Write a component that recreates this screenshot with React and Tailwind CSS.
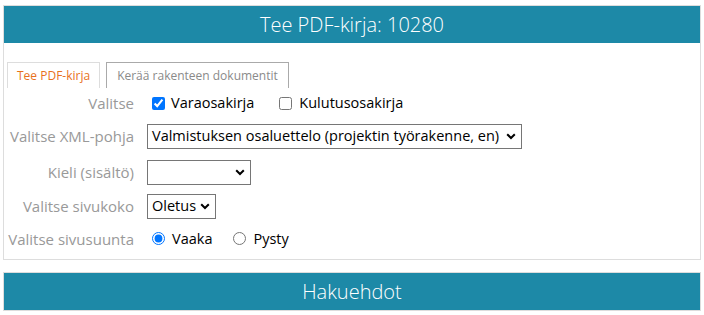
import React from "react";

const font = { fontFamily: '"Open Sans", "Noto Sans", sans-serif' };

function Chevron() {
  return (
    <svg width="10" height="7" viewBox="0 0 10 7" className="shrink-0">
      <path d="M1.2 1.2 L5 5 L8.8 1.2" fill="none" stroke="#000" strokeWidth="2" />
    </svg>
  );
}

function Select({ value, width }) {
  return (
    <div
      className={`flex h-[25px] items-center justify-between gap-[4px] border border-[#767676] bg-white pl-[4px] pr-[5px] text-[14.5px] text-black ${width}`}
    >
      <span className="whitespace-nowrap">{value}</span>
      <Chevron />
    </div>
  );
}

function Row({ label, children }) {
  return (
    <div className="flex items-center">
      <div className="w-[127px] shrink-0 whitespace-nowrap text-right text-[15px] text-[#999999]">{label}</div>
      <div className="ml-[13px] flex items-center">{children}</div>
    </div>
  );
}

function Header({ title }) {
  return (
    <div className="flex h-[37px] items-center justify-center bg-[#1d89a7] text-[20px] font-light text-white">
      {title}
    </div>
  );
}

export default function App() {
  return (
    <div className="bg-white px-[3px] pt-[5px]" style={font}>
      {/* Tee PDF-kirja */}
      <section className="border border-[#dddddd]">
        <Header title="Tee PDF-kirja: 10280" />

        <div className="px-[3px] pb-[9px] pt-[19px]">
          <div className="flex gap-[6px] text-[12px]">
            <div className="flex h-[26px] items-center border border-b-0 border-[#dddddd] px-[9px] text-[#e8711d]">
              Tee PDF-kirja
            </div>
            <div className="flex h-[26px] items-center border border-b-0 border-[#aaaaaa] px-[10px] text-[#8a8a8a]">
              Kerää rakenteen dokumentit
            </div>
          </div>

          <div className="flex flex-col gap-[9px] pt-[4px]">
            <Row label="Valitse">
              <label className="flex items-center text-[14.5px] text-black">
                <input type="checkbox" defaultChecked className="m-0 ml-[5px] h-[13px] w-[13px] accent-[#0075ff]" />
                <span className="ml-[6px]">Varaosakirja</span>
              </label>
              <label className="ml-[25px] flex items-center text-[14.5px] text-black">
                <input type="checkbox" className="m-0 h-[13px] w-[13px]" />
                <span className="ml-[7px]">Kulutusosakirja</span>
              </label>
            </Row>
            <Row label="Valitse XML-pohja">
              <Select value="Valmistuksen osaluettelo (projektin työrakenne, en)" width="w-[375px]" />
            </Row>
            <div className="pt-[2px]">
              <Row label="Kieli (sisältö)">
                <Select value="" width="w-[104px]" />
              </Row>
            </div>
            <Row label="Valitse sivukoko">
              <Select value="Oletus" width="w-[69px]" />
            </Row>
            <Row label="Valitse sivusuunta">
              <label className="flex items-center text-[14.5px] text-black">
                <input type="radio" name="suunta" defaultChecked className="m-0 ml-[5px] h-[13px] w-[13px] accent-[#0075ff]" />
                <span className="ml-[7px]">Vaaka</span>
              </label>
              <label className="ml-[21px] flex items-center text-[14.5px] text-black">
                <input type="radio" name="suunta" className="m-0 h-[13px] w-[13px]" />
                <span className="ml-[7px]">Pysty</span>
              </label>
            </Row>
          </div>
        </div>
      </section>

      {/* Hakuehdot */}
      <section className="mt-[12px] border border-[#dddddd]">
        <Header title="Hakuehdot" />
      </section>
    </div>
  );
}
